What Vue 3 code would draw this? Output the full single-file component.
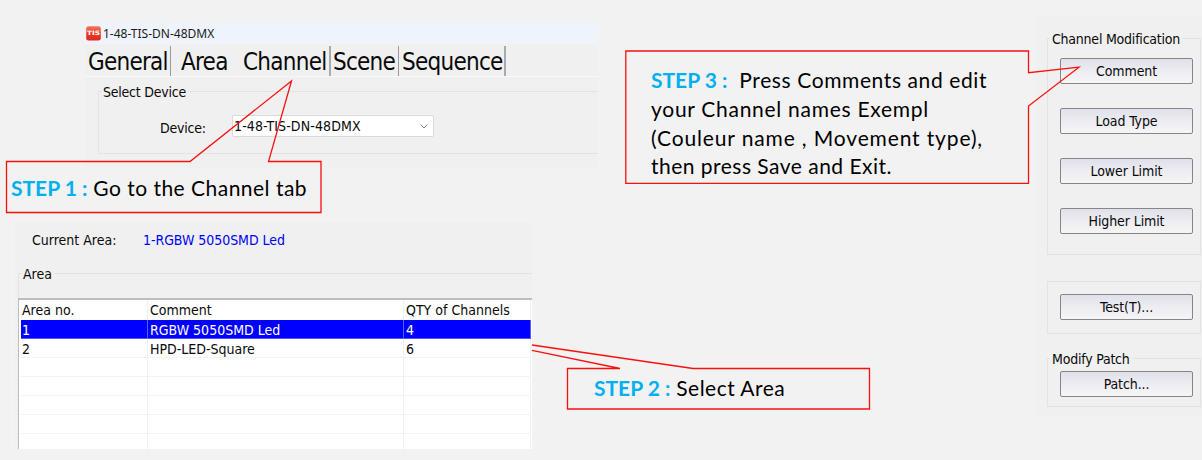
<script setup>
const tabs = [
  { label: 'General', cls: 'general' },
  { label: 'Area', cls: 'area-tab' },
  { label: 'Channel', cls: 'channel' },
  { label: 'Scene', cls: 'scene' },
  { label: 'Sequence', cls: 'sequence' },
]
const rows = [
  ['1', 'RGBW 5050SMD Led', '4'],
  ['2', 'HPD-LED-Square', '6'],
  ['', '', ''],
  ['', '', ''],
  ['', '', ''],
  ['', '', ''],
  ['', '', ''],
]
const channelButtons = ['Comment', 'Load Type', 'Lower Limit', 'Higher Limit']
</script>

<template>
  <main class="page">
    <div class="left">
      <section class="device-panel">
        <header class="titlebar">
          <svg class="logo" width="15" height="15" viewBox="0 0 15 15">
            <defs>
              <linearGradient id="logoRed" x1="0" y1="0" x2="0" y2="1">
                <stop offset="0" stop-color="#f4755c" />
                <stop offset="0.5" stop-color="#ee3b28" />
                <stop offset="1" stop-color="#d92a1c" />
              </linearGradient>
            </defs>
            <rect x="0.2" y="0.2" width="14.6" height="14.4" rx="2.4" fill="url(#logoRed)" />
            <text x="1" y="9.4" textLength="13" lengthAdjust="spacingAndGlyphs" class="logo-text">TIS</text>
          </svg>
          <span class="title">1-48-TIS-DN-48DMX</span>
        </header>
        <nav class="tabs">
          <div v-for="t in tabs" :key="t.label" class="tab" :class="t.cls"><span>{{ t.label }}</span></div>
        </nav>
        <div class="device-body">
          <div class="group device-group">
            <span class="legend select-legend">Select Device</span>
            <div class="device-row">
              <span class="device-label">Device:</span>
              <div class="combo">
                <span>1-48-TIS-DN-48DMX</span>
                <svg width="8" height="5" viewBox="0 0 8 5"><path d="M0.8 0.8L4 3.9L7.2 0.8" fill="none" stroke="#777" stroke-width="1" /></svg>
              </div>
            </div>
          </div>
        </div>
      </section>

      <section class="area-panel">
        <div class="current">
          <span class="current-label">Current Area:</span>
          <span class="current-value">1-RGBW 5050SMD Led</span>
        </div>
        <div class="group area-group">
          <span class="legend area-legend">Area</span>
          <div class="table">
            <div class="row head"><span>Area no.</span><span>Comment</span><span class="qty">QTY of Channels</span></div>
            <div v-for="(r, i) in rows" :key="i" class="row" :class="{ selected: i === 0 }">
              <span v-for="(c, j) in r" :key="j">{{ c }}</span>
            </div>
          </div>
        </div>
      </section>
    </div>

    <aside class="side">
      <div class="group channel-group">
        <span class="legend mod-legend">Channel Modification</span>
        <button v-for="b in channelButtons" :key="b">{{ b }}</button>
      </div>
      <div class="group test-group"><button>Test(T)...</button></div>
      <div class="group patch-group">
        <span class="legend patch-legend">Modify Patch</span>
        <button>Patch...</button>
      </div>
    </aside>

    <svg class="outlines" width="1202" height="460" viewBox="0 0 1202 460" fill="none" stroke="#f81010" stroke-width="1.3">
      <path d="M6.5 161.5H190L291.5 81L268.5 161.5H321V212.5H6.5Z" />
      <path d="M532 345L693 368.5H869.5V409H567.5V368.5H620L532 350.3" />
      <path d="M625.8 51H1028.5V72.7L1079 67.2L1028.5 106V183.3H625.8Z" />
    </svg>
    <p class="note step1"><b>STEP 1 :</b> Go to the Channel tab</p>
    <p class="note step2"><b>STEP 2 :</b> Select Area</p>
    <div class="note step3">
      <p class="l1"><b>STEP 3 :</b>&nbsp; Press Comments and edit</p>
      <p class="l2">your Channel names Exempl</p>
      <p class="l3">(Couleur name , Movement type),</p>
      <p class="l4">then press Save and Exit.</p>
    </div>
  </main>
</template>

<style>
body { background: #f2f2f2; }
</style>

<style scoped>
* { box-sizing: border-box; }
.page {
  position: relative;
  display: flex;
  justify-content: space-between;
  width: 1202px;
  height: 460px;
  overflow: hidden;
  background: #f2f2f2;
  color: #0a0a0a;
  font: 14px/18px "DejaVu Sans Condensed", "DejaVu Sans", sans-serif;
  letter-spacing: -0.22px;
  white-space: nowrap;
}
.left { width: 600px; padding-top: 22px; }
.device-panel { width: 513px; height: 146px; margin-left: 85px; background: #f0f0f0; }
.titlebar { display: flex; align-items: center; height: 22px; padding: 1px 0 0 1px; background: #eff3fb; }
.logo { flex: none; }
.logo-text { font: bold 6px "DejaVu Sans", sans-serif; fill: #fff; letter-spacing: 0; }
.title { margin-left: 2px; font: 12px/18px "Noto Sans", sans-serif; letter-spacing: 0; color: #1c1c1c; }
.tabs { display: flex; align-items: flex-start; height: 33px; padding-top: 2px; border-bottom: 1px solid #f8f8f8; }
.tab { height: 30px; font-size: 24px; line-height: 33px; letter-spacing: -0.75px; border-right: 1px solid #999; padding-left: 3px; }
.general { width: 86px; }
.area-tab { width: 63px; padding-left: 10px; border-right-color: transparent; }
.channel { width: 97px; padding-left: 9px; border-right: 2px solid #aaa; }
.scene { width: 68px; padding-left: 2px; }
.sequence { width: 107px; border-right: 2px solid #aaa; }
.device-body { padding: 14px 0 0 13px; }
.group { position: relative; border: 1px solid #e3e3e3; }
.legend { position: absolute; top: -9px; left: 3px; padding: 0 2px 0 1px; background: #f0f0f0; }
.device-group { height: 63px; border-right: 0; padding-top: 23px; }
.device-row { display: flex; padding-left: 61px; }
.device-label { width: 72px; padding-top: 4px; }
.combo { display: flex; align-items: center; justify-content: space-between; width: 202px; height: 22px; padding: 0 5px 0 1px; border: 1px solid #d9d9d9; border-radius: 2px; background: #fff; letter-spacing: 0.12px; }
.area-panel { width: 517px; height: 227px; margin: 54px 0 0 15px; background: #f0f0f0; letter-spacing: 0; }
.current { display: flex; height: 51px; padding: 9px 0 0 17px; }
.current-label { width: 111px; }
.current-value { color: #00f; letter-spacing: -0.05px; }
.area-group { height: 176px; margin-left: 3px; border-width: 1px 0 0 1px; padding-top: 24px; }
.table { height: 151px; margin-left: -1px; background: #fff; border-top: 2px solid #bdbdbd; border-left: 1px solid #bdbdbd; overflow: hidden; }
.row { display: grid; grid-template-columns: 127px 256px 1fr; height: 19px; margin: 0 1px 0 2px; border-bottom: 1px solid #f3f3f3; }
.row span { height: 18px; padding-left: 1px; line-height: 21px; border-right: 1px solid #f0f0f0; }
.row span + span { padding-left: 2px; }
.head { height: 20px; border: 0; }
.row.head span { height: 20px; line-height: 21px; }
.selected { background: #00f; color: #fff; border-bottom-color: #55f; }
.selected span { border-color: #5a5aff; line-height: 20px; }
.side { width: 166px; height: 401px; margin-top: 15px; padding: 23px 1px 0 11px; background: #f0f0f0; }
.side .legend { left: 2px; padding-left: 2px; }
button { display: block; width: 133px; height: 26px; margin: 0; padding: 0; border: 1px solid #868686; border-radius: 2px; background: linear-gradient(#e0e0ea, #ececf2 50%, #f6f6f8); color: #0a0a0a; font: inherit; letter-spacing: -0.1px; line-height: 24px; }
.channel-group { display: flex; flex-direction: column; gap: 24px; height: 217px; padding: 19px 0 0 12px; }
.test-group { height: 53px; margin-top: 26px; padding: 12px 0 0 12px; }
.patch-group { height: 49px; margin-top: 24px; padding: 12px 0 0 12px; }
.outlines { position: absolute; inset: 0; }
.note { position: absolute; margin: 0; font: 21px/28.8px Lato, sans-serif; letter-spacing: 0.48px; color: #000; }
.note p { margin: 0; }
.note b { color: #00b0f0; letter-spacing: 0; }
.step1 { left: 11px; top: 174px; }
.step2 { left: 594px; top: 374px; }
.step3 { left: 651px; top: 66px; }
.l1 { letter-spacing: 0.6px; }
.l2 { letter-spacing: 0.72px; }
.l3 { letter-spacing: 0.86px; }
</style>
